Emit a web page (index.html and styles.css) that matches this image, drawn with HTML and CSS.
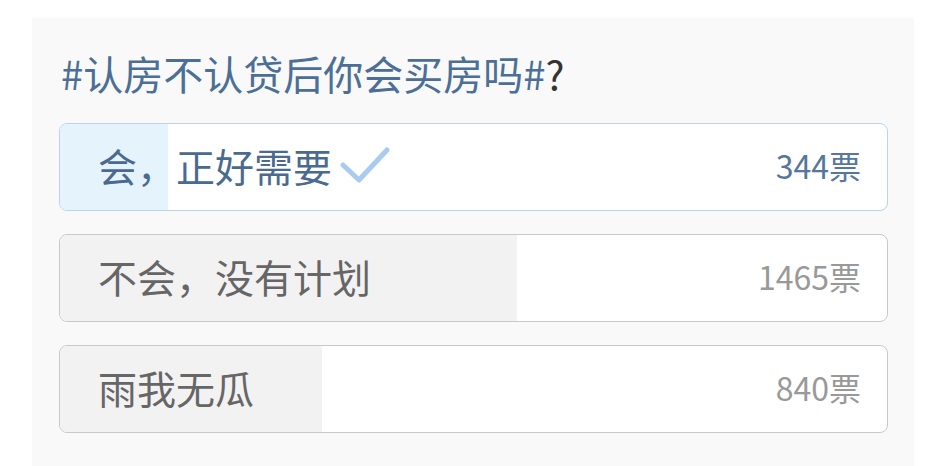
FILE: index.html
```html
<!DOCTYPE html>
<html lang="zh-CN">
<head>
  <meta charset="UTF-8">
  <meta name="viewport" content="width=device-width, initial-scale=1.0">
  <title>投票</title>
  <link rel="stylesheet" href="styles.css">
</head>
<body>
  <div class="poll">
    <h2 class="poll-title"><span class="topic">#认房不认贷后你会买房吗#</span>?</h2>

    <div class="option voted">
      <div class="fill" style="width: 13%"></div>
      <span class="label">会，正好需要
        <svg class="check" width="50" height="40" viewBox="0 0 50 40">
          <path d="M3 20 L19 35 L47 5" fill="none" stroke="#a9cbf0" stroke-width="5" stroke-linecap="round" stroke-linejoin="round"/>
        </svg>
      </span>
      <span class="count">344票</span>
    </div>

    <div class="option">
      <div class="fill" style="width: 55.3%"></div>
      <span class="label">不会，没有计划</span>
      <span class="count">1465票</span>
    </div>

    <div class="option">
      <div class="fill" style="width: 31.7%"></div>
      <span class="label">雨我无瓜</span>
      <span class="count">840票</span>
    </div>
  </div>
</body>
</html>
```

FILE: styles.css
```css
body {
  margin: 0;
  background: #fff;
  font-family: "Noto Sans CJK SC", "Noto Sans", sans-serif;
}

.poll {
  margin: 18px 30px 0 32px;
  height: 448px;
  box-sizing: border-box;
  padding: 30px 26px 0 27px;
  background: #f9f9f9;
  display: flex;
  flex-direction: column;
  gap: 23px;
}

.poll-title {
  margin: 0 0 2px 2px;
  font-size: 40px;
  font-weight: normal;
  line-height: 50px;
  color: #333;
}

.topic {
  color: #4b6f96;
}

.option {
  position: relative;
  overflow: hidden;
  height: 88px;
  box-sizing: border-box;
  border: 1.5px solid #c9c9c9;
  border-radius: 8px;
  background: #fff;
  display: flex;
  align-items: center;
  justify-content: space-between;
  padding: 0 26px 4px 38px;
}

.option .fill {
  position: absolute;
  top: 0;
  left: 0;
  bottom: 0;
  background: #f2f2f2;
}

.label,
.count {
  position: relative;
}

.label {
  display: flex;
  align-items: center;
  font-size: 39px;
  color: #666;
}

.count {
  font-size: 32px;
  color: #999;
}

.option.voted {
  border-color: #b8d6ea;
}

.option.voted .fill {
  background: #e5f3fd;
}

.option.voted .label {
  color: #4a6a90;
}

.option.voted .count {
  color: #55779c;
}

.check {
  margin-left: 8px;
}
```
